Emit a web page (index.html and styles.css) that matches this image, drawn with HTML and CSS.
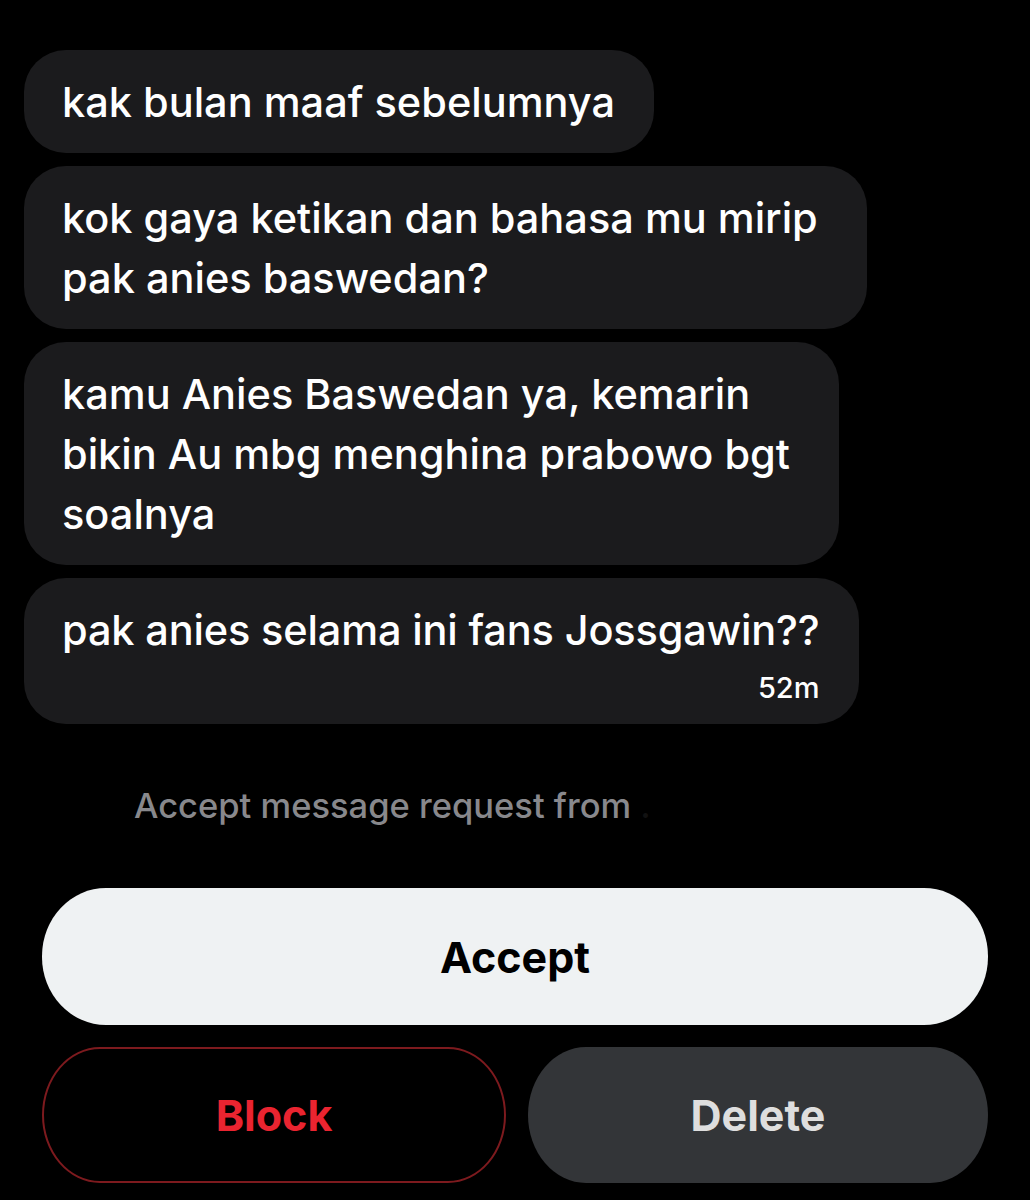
FILE: index.html
```html
<!DOCTYPE html>
<html lang="id">
<head>
<meta charset="utf-8">
<title>Message request</title>
<link rel="stylesheet" href="styles.css">
</head>
<body>
<main class="screen">
  <section class="thread">
    <div class="bubble">kak bulan maaf sebelumnya</div>
    <div class="bubble bubble-wrap">kok gaya ketikan dan bahasa mu mirip<br>pak anies baswedan?</div>
    <div class="bubble bubble-wrap">kamu Anies Baswedan ya, kemarin<br>bikin Au mbg menghina prabowo bgt<br>soalnya</div>
    <div class="bubble bubble-last">
      <span class="last-text">pak anies selama ini fans Jossgawin??</span>
      <span class="time">52m</span>
    </div>
  </section>
  <p class="request">Accept message request from <span class="hidden-name">.</span></p>
  <section class="actions">
    <button class="btn btn-accept">Accept</button>
    <div class="row">
      <button class="btn btn-block">Block</button>
      <button class="btn btn-delete">Delete</button>
    </div>
  </section>
</main>
</body>
</html>
```
FILE: styles.css
```css
* { box-sizing: border-box; }
html, body {
  margin: 0;
  background: #000;
}
body {
  width: 1030px;
  height: 1200px;
  overflow: hidden;
  font-family: Inter, "Liberation Sans", sans-serif;
  color: #fff;
}
.screen {
  padding: 50px 42px 0 24px;
}
.thread {
  display: flex;
  flex-direction: column;
  align-items: flex-start;
  gap: 13px;
}
.bubble {
  background: #1b1b1d;
  border-radius: 42px;
  padding: 22px 39px 21px 38px;
  font-size: 41.5px;
  font-weight: 500;
  line-height: 60px;
}
.bubble-wrap {
  padding-right: 49px;
}
.bubble-last {
  display: flex;
  flex-direction: column;
  padding-bottom: 16px;
  padding-right: 40px;
}
.last-text {
  letter-spacing: -0.16px;
}
.time {
  align-self: flex-end;
  margin-top: 8px;
  font-size: 29px;
  line-height: 40px;
  font-weight: 500;
}
.request {
  margin: 62px 0 0 110px;
  font-size: 34.5px;
  font-weight: 500;
  color: #88888c;
  line-height: 40px;
}
.hidden-name {
  color: #111;
}
.actions {
  margin-top: 62px;
  margin-left: 18px;
  display: flex;
  flex-direction: column;
  gap: 22px;
}
.btn {
  font-family: Inter, "Liberation Sans", sans-serif;
  font-weight: 700;
  font-size: 43px;
  border: 0;
  border-radius: 64px / 68px;
  height: 137px;
  width: 100%;
  cursor: pointer;
}
.btn-accept {
  background: #eff2f3;
  color: #000;
}
.row {
  display: flex;
  gap: 22px;
}
.row .btn {
  flex: 1;
  height: 136px;
  border-radius: 58px / 68px;
}
.btn-block {
  background: #000;
  border: 2px solid #7d1a1e;
  color: #ea2430;
}
.btn-delete {
  background: #333538;
  color: #dedede;
}
```
